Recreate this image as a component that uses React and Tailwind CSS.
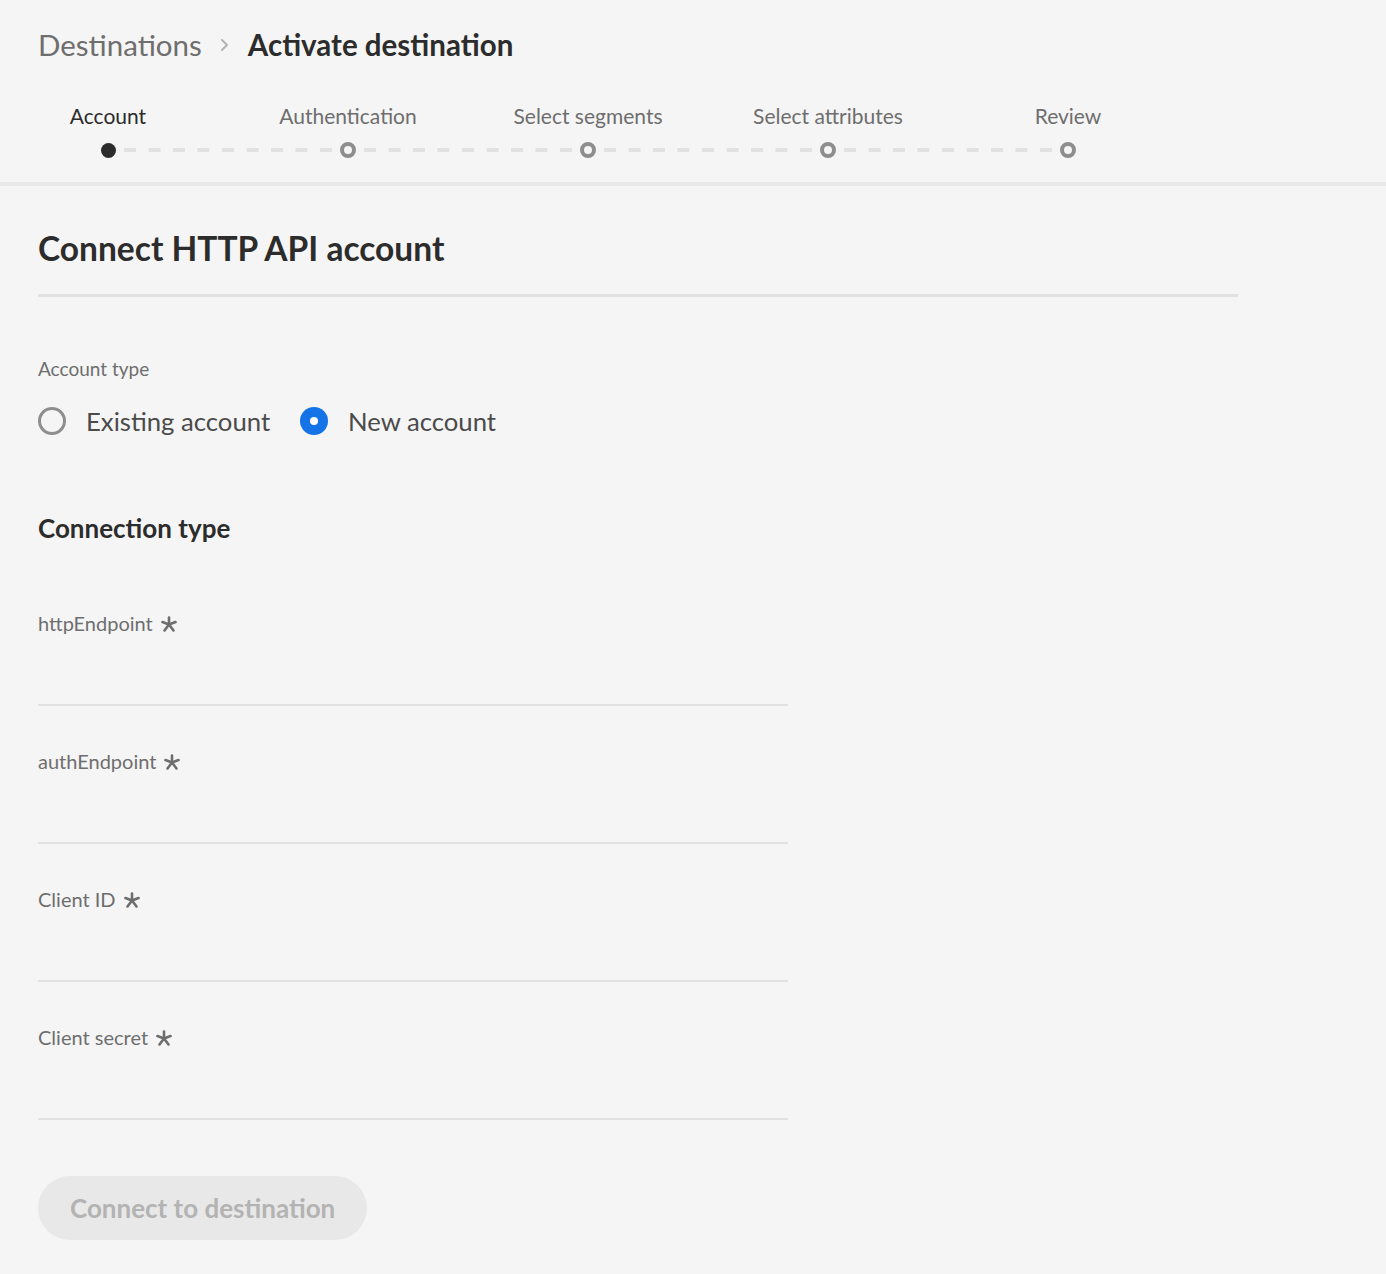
import { useState } from 'react'

const STEPS = ['Account', 'Authentication', 'Select segments', 'Select attributes', 'Review']

const FIELDS = ['httpEndpoint', 'authEndpoint', 'Client ID', 'Client secret']

function Asterisk() {
  return (
    <svg width="16" height="16" viewBox="0 0 16 16" className="ml-[8px] mt-[2px]" aria-hidden="true">
      <g stroke="#6e6e6e" strokeWidth="2.6" strokeLinecap="round">
        <line x1="8" y1="8.5" x2="8" y2="1.5" />
        <line x1="8" y1="8.5" x2="1.5" y2="6" />
        <line x1="8" y1="8.5" x2="14.5" y2="6" />
        <line x1="8" y1="8.5" x2="3.5" y2="14.5" />
        <line x1="8" y1="8.5" x2="12.5" y2="14.5" />
      </g>
    </svg>
  )
}

function Connector() {
  return (
    <svg width="208" height="4" viewBox="0 0 208 4" className="mx-[8px]" aria-hidden="true">
      <line x1="0" y1="2" x2="208" y2="2" stroke="#e1e1e1" strokeWidth="4" strokeDasharray="12 12.5" />
    </svg>
  )
}

function Stepper() {
  return (
    <div>
      <div className="flex -ml-[50px]">
        {STEPS.map((label, i) => (
          <div key={label} className="w-[240px] flex justify-center">
            <span
              className={
                'h-[24px] leading-[24px] text-[21px] ' +
                (i === 0 ? 'text-[#2c2c2c]' : 'text-[#6e6e6e]')
              }
            >
              {label}
            </span>
          </div>
        ))}
      </div>
      <div className="mt-[14px] ml-[62px] flex items-center h-[16px]">
        {STEPS.map((label, i) => (
          <div key={label} className="flex items-center">
            <div className="w-[16px] h-[16px] flex items-center justify-center">
              {i === 0 ? (
                <div className="w-[15px] h-[15px] rounded-full bg-[#2c2c2c]" />
              ) : (
                <div className="w-[16px] h-[16px] rounded-full border-[4px] border-[#8e8e8e] bg-[#f5f5f5]" />
              )}
            </div>
            {i < STEPS.length - 1 && <Connector />}
          </div>
        ))}
      </div>
    </div>
  )
}

function Radio({ checked, label, onClick }) {
  return (
    <button type="button" onClick={onClick} className="flex items-center h-[32px] cursor-pointer">
      {checked ? (
        <span className="w-[28px] h-[28px] rounded-full bg-[#1473e6] flex items-center justify-center">
          <span className="w-[8px] h-[8px] rounded-full bg-white" />
        </span>
      ) : (
        <span className="w-[28px] h-[28px] rounded-full border-[3px] border-[#8e8e8e] bg-[#f5f5f5]" />
      )}
      <span className="ml-[20px] text-[25.7px] leading-[32px] text-[#4b4b4b]">{label}</span>
    </button>
  )
}

export default function App() {
  const [accountType, setAccountType] = useState('new')

  return (
    <div
      className="min-h-screen w-full bg-[#f5f5f5]"
      style={{ fontFamily: 'Lato, "Noto Sans", sans-serif' }}
    >
      <header className="pt-[27px] px-[38px] pb-[24px] border-b-4 border-[#e8e8e8]">
        <nav className="flex items-center h-[36px] text-[29.5px] leading-[36px]">
          <span className="text-[#6e6e6e]">Destinations</span>
          <svg width="12" height="16" viewBox="0 0 12 16" className="mx-[17px]" aria-hidden="true">
            <path d="M3 3l5 5-5 5" fill="none" stroke="#b3b3b3" strokeWidth="2" strokeLinecap="round" strokeLinejoin="round" />
          </svg>
          <span className="font-bold text-[#2c2c2c]">Activate destination</span>
        </nav>
        <div className="pt-[41px]">
          <Stepper />
        </div>
      </header>

      <main className="px-[38px] pb-[34px]">
        <h1 className="mt-[42px] h-[40px] leading-[40px] text-[33.5px] font-bold text-[#2c2c2c]">
          Connect HTTP API account
        </h1>
        <div className="mt-[26px] w-[1200px] h-[3px] bg-[#e1e1e1]" />

        <p className="mt-[60px] h-[24px] leading-[24px] text-[19px] text-[#6e6e6e]">Account type</p>
        <div className="mt-[24px] flex items-center gap-[30px]">
          <Radio
            checked={accountType === 'existing'}
            label="Existing account"
            onClick={() => setAccountType('existing')}
          />
          <Radio
            checked={accountType === 'new'}
            label="New account"
            onClick={() => setAccountType('new')}
          />
        </div>

        <h2 className="mt-[75px] h-[32px] leading-[32px] text-[26px] font-bold text-[#2c2c2c]">
          Connection type
        </h2>

        <div className="mt-[67px] flex flex-col gap-[43px] w-[750px]">
          {FIELDS.map((name) => (
            <div key={name}>
              <label className="flex items-center h-[24px] leading-[24px] text-[20px] text-[#6e6e6e]">
                {name}
                <Asterisk />
              </label>
              <input
                className="block w-full h-[71px] bg-transparent border-b-2 border-[#e1e1e1] outline-none text-[20px] text-[#2c2c2c]"
                type={name === 'Client secret' ? 'password' : 'text'}
              />
            </div>
          ))}
        </div>

        <button
          type="button"
          disabled
          className="mt-[56px] h-[64px] px-[32px] rounded-full bg-[#e8e8e8] text-[26px] font-bold text-[#b3b3b3]"
        >
          Connect to destination
        </button>
      </main>
    </div>
  )
}
